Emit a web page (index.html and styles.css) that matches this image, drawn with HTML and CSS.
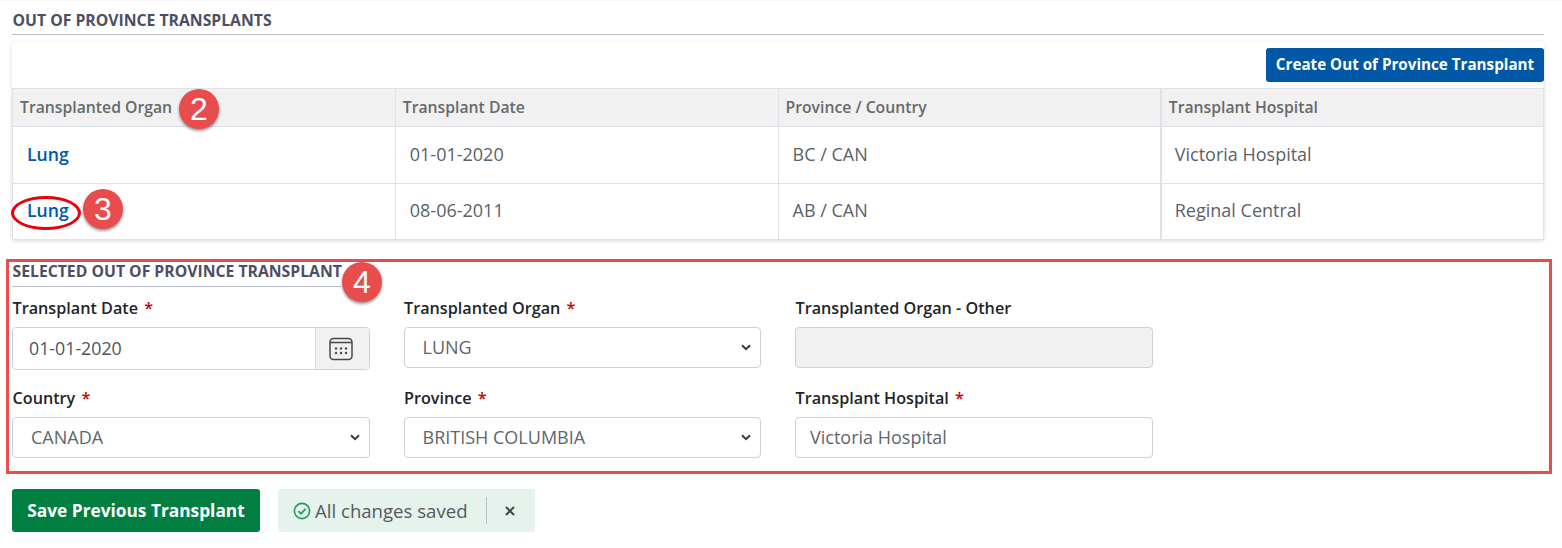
FILE: index.html
```html
<!DOCTYPE html>
<html lang="en">
<head>
  <meta charset="UTF-8">
  <meta name="viewport" content="width=device-width, initial-scale=1">
  <title>Out of Province Transplants</title>
  <link rel="stylesheet" href="styles.css">
</head>
<body>

  <div class="page">
    <h2 class="section-title">OUT OF PROVINCE TRANSPLANTS</h2>

    <div class="card">
      <div class="card-actions">
        <button class="btn btn-primary">Create Out of Province Transplant</button>
      </div>
      <table class="data-table">
        <thead>
          <tr>
            <th>Transplanted Organ<span class="marker marker-2">2</span></th>
            <th>Transplant Date</th>
            <th>Province / Country</th>
            <th class="col-last">Transplant Hospital</th>
          </tr>
        </thead>
        <tbody>
          <tr>
            <td><a href="#">Lung</a></td>
            <td>01-01-2020</td>
            <td>BC / CAN</td>
            <td class="col-last">Victoria Hospital</td>
          </tr>
          <tr>
            <td>
              <a href="#">Lung</a>
              <span class="ring"></span>
              <span class="marker marker-3">3</span>
            </td>
            <td>08-06-2011</td>
            <td>AB / CAN</td>
            <td class="col-last">Reginal Central</td>
          </tr>
        </tbody>
      </table>
    </div>

    <section class="selected">
      <span class="frame"></span>
      <div class="selected-head">
        <h2 class="section-title">SELECTED OUT OF PROVINCE TRANSPLANT</h2>
        <span class="marker marker-4">4</span>
      </div>

      <div class="form-grid">
        <div class="field">
          <label>Transplant Date <span class="req">*</span></label>
          <div class="date-group">
            <div class="date-value">01-01-2020</div>
            <div class="date-btn">
              <svg width="24" height="24" viewBox="0 0 24 24" fill="none" stroke="#44484d" stroke-width="1.5">
                <rect x="1" y="1.5" width="22" height="21" rx="3.5"/>
                <path d="M1 5.5h22"/>
                <g fill="#44484d" stroke="none">
                  <circle cx="7" cy="11.5" r="1.2"/>
                  <circle cx="12" cy="11.5" r="1.2"/>
                  <circle cx="17" cy="11.5" r="1.2"/>
                  <circle cx="7" cy="16" r="1.2"/>
                  <circle cx="12" cy="16" r="1.2"/>
                  <circle cx="17" cy="16" r="1.2"/>
                </g>
              </svg>
            </div>
          </div>
        </div>
        <div class="field">
          <label>Transplanted Organ <span class="req">*</span></label>
          <div class="select">LUNG
            <svg class="chevron" width="10" height="7" viewBox="0 0 10 7" fill="none" stroke="#343a40" stroke-width="2"><path d="M1 1.2l4 4 4-4"/></svg>
          </div>
        </div>
        <div class="field">
          <label>Transplanted Organ - Other</label>
          <div class="input input-disabled"></div>
        </div>
        <div class="field">
          <label>Country <span class="req">*</span></label>
          <div class="select">CANADA
            <svg class="chevron" width="10" height="7" viewBox="0 0 10 7" fill="none" stroke="#343a40" stroke-width="2"><path d="M1 1.2l4 4 4-4"/></svg>
          </div>
        </div>
        <div class="field">
          <label>Province <span class="req">*</span></label>
          <div class="select">BRITISH COLUMBIA
            <svg class="chevron" width="10" height="7" viewBox="0 0 10 7" fill="none" stroke="#343a40" stroke-width="2"><path d="M1 1.2l4 4 4-4"/></svg>
          </div>
        </div>
        <div class="field">
          <label>Transplant Hospital <span class="req">*</span></label>
          <div class="input">Victoria Hospital</div>
        </div>
      </div>
    </section>

    <div class="footer-row">
      <button class="btn btn-save">Save Previous Transplant</button>
      <div class="saved">
        <svg width="18" height="18" viewBox="0 0 18 18" fill="none" stroke="#1ba25a" stroke-width="1.6">
          <circle cx="9" cy="9" r="7.6"/>
          <path d="M5.4 9.2l2.6 2.5 4.6-4.8" stroke-width="1.8"/>
        </svg>
        <span class="saved-text">All changes saved</span>
        <span class="saved-close">
          <svg width="10" height="10" viewBox="0 0 10 10" fill="none" stroke="#44484d" stroke-width="2"><path d="M1 1l8 8M9 1l-8 8"/></svg>
        </span>
      </div>
    </div>
  </div>

</body>
</html>
```

FILE: styles.css
```css
* {
  box-sizing: border-box;
}

html, body {
  height: 100%;
}

body {
  margin: 0;
  font-family: 'Open Sans', sans-serif;
  font-size: 18px;
  color: #5b6168;
  background: #fff;
  overflow: hidden;
}

.page {
  padding: 11px 18px 0 12px;
  box-shadow: inset 0 1px 1px rgba(0, 0, 0, 0.04);
  height: 100%;
}

.section-title {
  margin: 0;
  font-size: 15.75px;
  line-height: 18px;
  font-weight: 700;
  color: #4c4f63;
  padding-left: 0.5px;
  padding-bottom: 5px;
  border-bottom: 1px solid #b6bcc8;
}

.card {
  margin-top: 7px;
  border-radius: 4px;
  box-shadow: 0 1px 4px rgba(60, 70, 100, 0.2);
  background: #fff;
}

.card-actions {
  display: flex;
  justify-content: flex-end;
  padding-top: 6px;
  padding-bottom: 6px;
}

.btn {
  border: none;
  border-radius: 3px;
  font-family: inherit;
  font-weight: 700;
  color: #fff;
  cursor: pointer;
}

.btn-primary {
  height: 34px;
  width: 278px;
  padding: 0 0 3px;
  font-size: 15.2px;
  background: #0058a6;
}

.data-table {
  width: 100%;
  table-layout: fixed;
  border-collapse: collapse;
  font-size: 18px;
}

.data-table th,
.data-table td {
  border: 1px solid #dfe1e8;
  text-align: left;
  position: relative;
}

.data-table .col-last {
  border-left: 2px solid #dfe1e8;
}

.data-table th {
  height: 38px;
  padding: 0 7px 1px;
  font-size: 15.75px;
  font-weight: 600;
  color: #66696d;
  background: #f1f1f1;
}

.data-table td {
  height: 56.5px;
  padding: 0 14px 1px;
}

.data-table td.col-last {
  padding-left: 13px;
}

.data-table tbody tr:last-child td {
  padding-bottom: 3px;
}

.data-table a {
  color: #0058a6;
  font-size: 17.6px;
  font-weight: 600;
  text-decoration: none;
}

.marker {
  position: absolute;
  width: 40px;
  height: 40px;
  border-radius: 50%;
  background: #e84c4c;
  color: #fff;
  font-family: 'Liberation Sans', sans-serif;
  font-size: 32px;
  font-weight: 400;
  line-height: 40px;
  text-align: center;
  box-shadow: 0 2px 3px rgba(0, 0, 0, 0.4);
}

.marker-2 {
  left: 166px;
  top: 0px;
}

.marker-3 {
  left: 70px;
  top: 5px;
}

.marker-4 {
  left: 330px;
  top: 0;
}

.ring {
  position: absolute;
  left: -2px;
  top: 12px;
  width: 70px;
  height: 34px;
  border: 3px solid #e8000b;
  border-radius: 50%;
}

.selected {
  position: relative;
  margin-top: 22px;
}

.frame {
  position: absolute;
  left: -6px;
  right: -8px;
  top: -3px;
  height: 215px;
  border: 3px solid #e84c4c;
  pointer-events: none;
}

.selected-head {
  position: relative;
  width: 329px;
}

.selected-head .section-title {
  white-space: nowrap;
  padding-bottom: 6px;
}

.form-grid {
  display: grid;
  grid-template-columns: repeat(3, 357.5px);
  column-gap: 34px;
  margin-top: 11px;
}

.field {
  height: 90px;
}

.field label {
  display: block;
  padding-left: 0.5px;
  font-size: 16.2px;
  line-height: 20px;
  font-weight: 600;
  color: #212529;
  margin-bottom: 9px;
}

.req {
  margin-left: 2px;
  color: #c00;
}

.input,
.select {
  height: 41px;
  border: 1px solid #ced1d6;
  border-radius: 4px;
  font-size: 18px;
  line-height: 39px;
  color: #5f656b;
  background: #fff;
}

.input {
  padding: 0 14px;
}

.input-disabled {
  background: #f1f1f1;
}

.select {
  position: relative;
  padding: 0 18px;
}

.chevron {
  position: absolute;
  right: 9px;
  top: 16px;
}

.date-group {
  display: flex;
  height: 43px;
  border: 1px solid #ced1d6;
  border-radius: 4px;
  overflow: hidden;
}

.date-value {
  flex: 1;
  padding: 0 16px;
  font-size: 17.8px;
  line-height: 41px;
  color: #4f555b;
}

.date-btn {
  width: 54px;
  padding-right: 3px;
  display: flex;
  align-items: center;
  justify-content: center;
  background: #f1f1f1;
  border-left: 1px solid #dadce0;
}

.footer-row {
  display: flex;
  gap: 18px;
  margin-top: 11px;
}

.btn-save {
  width: 248px;
  height: 43px;
  padding: 0;
  font-size: 17.3px;
  background: #007f41;
}

.saved {
  display: flex;
  align-items: center;
  width: 257px;
  height: 43px;
  padding-left: 15px;
  border-radius: 3px;
  background: #e6f2ec;
}

.saved-text {
  margin-left: 4px;
  font-size: 18.6px;
  color: #54595f;
}

.saved-close {
  display: flex;
  align-items: center;
  justify-content: center;
  height: 27px;
  width: 48px;
  margin-left: 18px;
  border-left: 1px solid #b9c6c4;
}
```
